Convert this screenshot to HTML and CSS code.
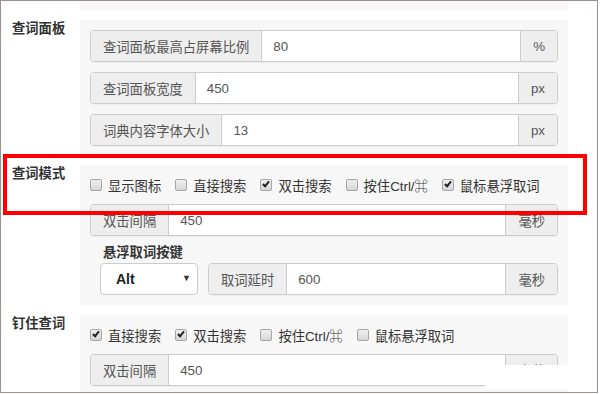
FILE: index.html
```html
<!DOCTYPE html>
<html>
<head>
    <meta charset="UTF-8">
    <title>查词设置</title>
    <link rel="stylesheet" href="styles.css">
</head>
<body>

<div class="frame">
    <div class="section">
        <div class="sec-label"></div>
        <div class="panel panel-cut"></div>
    </div>

    <div class="section">
        <div class="sec-label">查词面板</div>
        <div class="panel">
            <div class="group">
                <span class="addon">查词面板最高占屏幕比例</span>
                <span class="field">80</span>
                <span class="addon">%</span>
            </div>
            <div class="group">
                <span class="addon">查词面板宽度</span>
                <span class="field">450</span>
                <span class="addon">px</span>
            </div>
            <div class="group">
                <span class="addon">词典内容字体大小</span>
                <span class="field">13</span>
                <span class="addon">px</span>
            </div>
        </div>
    </div>

    <div class="section">
        <div class="sec-label">查词模式</div>
        <div class="panel">
            <div class="checks">
                <label class="check"><span class="box"></span>显示图标</label>
                <label class="check"><span class="box"></span>直接搜索</label>
                <label class="check"><span class="box on"></span>双击搜索</label>
                <label class="check"><span class="box"></span>按住Ctrl/⌘</label>
                <label class="check"><span class="box on"></span>鼠标悬浮取词</label>
            </div>
            <div class="group">
                <span class="addon">双击间隔</span>
                <span class="field">450</span>
                <span class="addon">毫秒</span>
            </div>
            <div class="sub-label">悬浮取词按键</div>
            <div class="row">
                <div class="select">Alt<span class="caret">▼</span></div>
                <div class="group">
                    <span class="addon">取词延时</span>
                    <span class="field">600</span>
                    <span class="addon">毫秒</span>
                </div>
            </div>
        </div>
    </div>

    <div class="section">
        <div class="sec-label">钉住查词</div>
        <div class="panel">
            <div class="checks">
                <label class="check"><span class="box on"></span>直接搜索</label>
                <label class="check"><span class="box on"></span>双击搜索</label>
                <label class="check"><span class="box"></span>按住Ctrl/⌘</label>
                <label class="check"><span class="box"></span>鼠标悬浮取词</label>
            </div>
            <div class="group">
                <span class="addon">双击间隔</span>
                <span class="field">450</span>
                <span class="addon">毫秒</span>
            </div>
        </div>
    </div>

    <div class="highlight"></div>
    <div class="mask"></div>
</div>

</body>
</html>
```

FILE: styles.css
```css
*, *::after, *::before {
    box-sizing: border-box;
}

html, body {
    margin: 0;
    padding: 0;
    background: #fff;
    font-family: "Liberation Sans", "Noto Sans CJK SC", sans-serif;
    font-size: 13.3px;
    color: #333;
}

.frame {
    position: relative;
    width: 598px;
    height: 393px;
    border: 1px solid #9c8f8f;
    overflow: hidden;
}

.section {
    display: flex;
    margin-bottom: 10px;
}

.sec-label {
    width: 79px;
    padding-left: 11px;
    line-height: 17px;
    font-weight: bold;
    color: #333;
}

.panel {
    width: 488px;
    background: #f7f7f7;
    padding: 10px 10px 9px;
    display: flex;
    flex-direction: column;
    gap: 10px;
}

.panel-cut {
    height: 9px;
    padding: 0;
}

.group {
    display: flex;
    height: 32px;
    flex: auto;
    border: 1px solid #ccc;
    border-radius: 4px;
    background: #fff;
    overflow: hidden;
    color: #555;
    box-shadow: 0 1px 1px rgba(0, 0, 0, 0.04);
}

.addon {
    display: flex;
    align-items: center;
    padding: 0 12px;
    background: #eee;
    white-space: nowrap;
}

.addon:first-child {
    border-right: 1px solid #ccc;
}

.addon:last-child {
    border-left: 1px solid #ccc;
}

.field {
    flex: auto;
    display: flex;
    align-items: center;
    padding-left: 11px;
}

.checks {
    display: flex;
    align-items: center;
    height: 20px;
    margin-bottom: -1px;
}

.check {
    display: flex;
    align-items: center;
    margin-right: 14px;
    white-space: nowrap;
}

.box {
    width: 12px;
    height: 12px;
    margin-right: 6px;
    border: 1px solid #a6a6a6;
    border-radius: 2px;
    background: linear-gradient(#f0f0f0, #d6d6d6);
    position: relative;
}

.box.on::after {
    content: "";
    position: absolute;
    left: 3px;
    top: 0;
    width: 4px;
    height: 7px;
    border: solid #222;
    border-width: 0 2px 2px 0;
    transform: rotate(40deg);
}

.sub-label {
    font-weight: bold;
    padding-left: 13px;
    line-height: 18px;
    margin: -2px 0 -9px;
}

.row {
    display: flex;
    gap: 10px;
    padding-left: 10px;
    margin-bottom: 1px;
}

.select {
    width: 98px;
    height: 32px;
    flex: none;
    display: flex;
    align-items: center;
    padding-left: 15px;
    background: #fff;
    border: 1px solid #ccc;
    border-radius: 4px;
    font-weight: bold;
    font-size: 14px;
    color: #222;
    position: relative;
}

.caret {
    position: absolute;
    right: 6px;
    top: 9px;
    font-size: 9px;
    color: #333;
}

.highlight {
    position: absolute;
    left: 2px;
    top: 153px;
    width: 584px;
    height: 61px;
    border: 4px solid #f00;
}

.mask {
    position: absolute;
    left: 484px;
    top: 364px;
    width: 84px;
    height: 24px;
    background: #fff;
}
```
